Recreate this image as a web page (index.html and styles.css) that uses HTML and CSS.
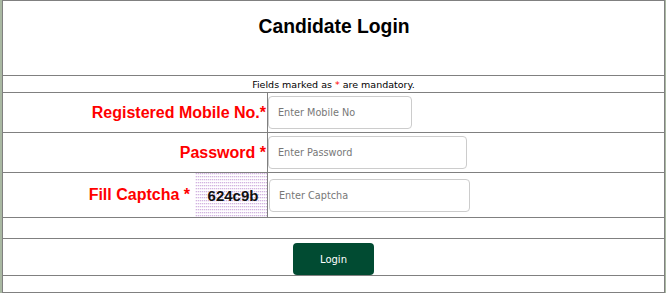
FILE: index.html
```html
<!DOCTYPE html>
<html>
<head>
<meta charset="utf-8">
<title>Candidate Login</title>
<link rel="stylesheet" href="styles.css">
</head>
<body>
<div class="frame">
  <div class="row title-row"><h2 class="title">Candidate Login</h2></div>
  <div class="row note-row"><span class="note">Fields marked as <span class="req">*</span> are mandatory.</span></div>
  <div class="row field-row">
    <div class="label-cell"><label class="label" for="mobile">Registered Mobile No.*</label></div>
    <div class="input-cell"><input id="mobile" class="inp inp-mobile" type="text" placeholder="Enter Mobile No"></div>
  </div>
  <div class="row field-row">
    <div class="label-cell"><label class="label" for="pwd">Password *</label></div>
    <div class="input-cell"><input id="pwd" class="inp inp-pwd" type="password" placeholder="Enter Password"></div>
  </div>
  <div class="row captcha-row">
    <div class="label-cell captcha-cell"><label class="label" for="cap">Fill Captcha *</label><div class="captcha">624c9b</div></div>
    <div class="input-cell"><input id="cap" class="inp inp-cap" type="text" placeholder="Enter Captcha"></div>
  </div>
  <div class="row spacer-row"></div>
  <div class="row button-row"><button class="btn" type="button">Login</button></div>
  <div class="row foot-row"></div>
</div>
</body>
</html>
```
FILE: styles.css
```css
html, body {
  margin: 0;
  padding: 0;
}
body {
  background: #a9b8a2;
  padding-left: 2px;
  font-family: "Liberation Sans", Arial, sans-serif;
}
.frame {
  width: 663px;
  height: 293px;
  box-sizing: border-box;
  border: 1px solid #808080;
  background: #fff;
}
.row {
  border-bottom: 1px solid #808080;
  display: flex;
}
.title-row {
  height: 74px;
  justify-content: center;
  align-items: flex-start;
}
.title {
  margin: 14px 0 0 1px;
  font-size: 19.3px;
  line-height: 24px;
  font-weight: bold;
  color: #000;
}
.note-row {
  height: 16px;
  justify-content: center;
  align-items: flex-end;
}
.note {
  font-family: "DejaVu Sans", sans-serif;
  font-size: 9.5px;
  line-height: 14px;
  color: #000;
  white-space: pre;
}
.req { color: #f00; }
.field-row { height: 39px; }
.captcha-row { height: 44px; }
.label-cell {
  width: 265px;
  border-right: 1px solid #808080;
  display: flex;
  justify-content: flex-end;
  align-items: center;
  padding-right: 1px;
  box-sizing: border-box;
}
.captcha-cell {
  padding-right: 0;
  align-items: stretch;
}
.captcha-cell .label {
  align-self: center;
  margin-right: 5px;
}
.label {
  color: #f00;
  font-size: 16px;
  font-weight: bold;
  line-height: 20px;
}
.captcha {
  width: 72px;
  display: flex;
  align-items: center;
  justify-content: center;
  padding-left: 4px;
  box-sizing: border-box;
  font-size: 15px;
  font-weight: bold;
  color: #111;
  background-color: #fff;
  background-image:
    repeating-linear-gradient(90deg, rgba(255,255,255,0.7) 0 1px, transparent 1px 2px),
    repeating-linear-gradient(180deg, #d2b4e0 0 1px, #f3e8f7 1px 2px, #fff 2px 3px);
}
.input-cell {
  flex: 1;
  display: flex;
  align-items: center;
}
.inp {
  height: 33px;
  box-sizing: border-box;
  border: 1px solid #cccccc;
  border-radius: 4px;
  padding: 0 9px;
  font-family: "DejaVu Sans", sans-serif;
  font-size: 9.7px;
  color: #555;
  background: #fff;
  outline: none;
}
.inp::placeholder { color: #777; }
.inp-mobile { width: 144px; }
.inp-pwd { width: 199px; }
.inp-cap { width: 201px; margin-left: 1px; }
.spacer-row { height: 20px; }
.button-row {
  height: 36px;
  justify-content: center;
  align-items: flex-start;
}
.btn {
  margin-top: 4px;
  width: 81px;
  height: 32px;
  border: none;
  border-radius: 4px;
  background: #014b32;
  color: #fff;
  font-family: "DejaVu Sans", sans-serif;
  font-size: 10px;
  padding: 0;
}
.foot-row {
  height: 16px;
  border-bottom: none;
}
```
